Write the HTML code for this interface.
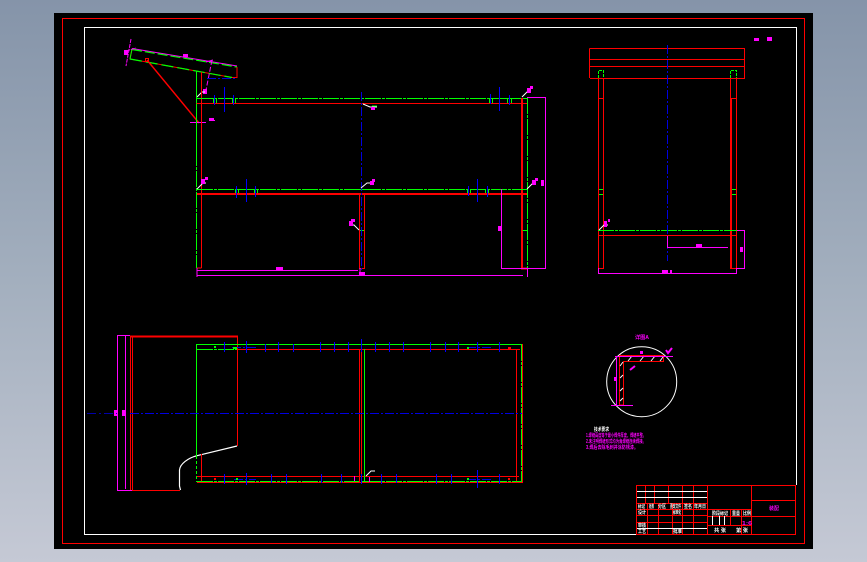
<!DOCTYPE html>
<html><head><meta charset="utf-8"><style>
html,body{margin:0;padding:0;width:867px;height:562px;overflow:hidden;background:linear-gradient(180deg,#8594a9 0%,#a3afbe 50%,#c5c9d5 100%)}
svg{position:absolute;left:0;top:0;display:block}
text{font-family:"Liberation Sans","Noto Sans CJK SC",sans-serif;font-weight:bold}
.r{stroke:#f00;fill:none;shape-rendering:crispEdges}
.g{stroke:#0f0;fill:none;shape-rendering:crispEdges}
.gd{stroke:#0f0;fill:none;stroke-dasharray:16 1 3 1;shape-rendering:crispEdges}
.m{stroke:#f0f;fill:none;shape-rendering:crispEdges}
.b{stroke:#00f;fill:none;shape-rendering:crispEdges}
.bd{stroke:#0000e0;fill:none;stroke-dasharray:9 2 2 2;shape-rendering:crispEdges}
.w{stroke:#fff;fill:none;shape-rendering:crispEdges}
.t{fill:#f0f;font-size:5px}
</style></head><body>
<svg width="867" height="562" viewBox="0 0 867 562">
<rect x="54" y="13" width="759" height="536" fill="#000"/>
<!-- frames -->
<path class="r" d="M62.5 18.5H804.5V543.5H62.5Z"/>
<path class="w" d="M636 534.5H84.5V27.5H796.5V485"/>

<!-- slanted plate -->
<path d="M132 48.5L237 66" stroke="#f0f" stroke-width="1" fill="none"/>
<path d="M132 49.5L237 67" stroke="#0f0" stroke-width="1.2" stroke-dasharray="10 3" fill="none"/>
<path d="M132 49L130 59L196 71L232 77.5H237V67" stroke="#f00" fill="none"/>
<path d="M130 59L196 71L232 77.5" stroke="#0f0" stroke-width="1.2" stroke-dasharray="12 4" fill="none"/>
<path d="M132 49L130 59" stroke="#0f0" fill="none"/>
<path d="M147 60L199 123" stroke="#f00" stroke-width="1.4" fill="none"/>
<rect x="145.5" y="58.5" width="3" height="3" fill="none" stroke="#f00"/>
<path d="M131 39L126 66M126 51L136 48" stroke="#f0f" stroke-dasharray="4 1" fill="none"/>
<path d="M212 60L206 90" stroke="#f0f" stroke-dasharray="5 2" fill="none"/>
<path d="M206 62L213 60" stroke="#f0f" fill="none"/>
<path class="bd" d="M207 78.5H237"/>
<path class="m" d="M190 122.5H206M209 120.5H215"/>
<rect x="183" y="54" width="5" height="3" fill="#f0f"/>
<rect x="209" y="118" width="5" height="2.5" fill="#f0f"/>
<rect x="124" y="50" width="4" height="5" fill="#f0f"/>
<rect x="203" y="89" width="4" height="5" fill="#f0f"/>
<path d="M197 97L202 92H205" stroke="#fff" fill="none"/>

<!-- front view -->
<path class="g" d="M196.5 71V150"/>
<path class="gd" d="M196.5 150V268"/>
<path class="r" d="M201.5 72V268M201.5 268H197M196.5 103.5H527"/>
<path class="gd" d="M197 98.5H527"/>
<path d="M522 98V268.5H527.5" stroke="#f00" stroke-width="1.6" fill="none" shape-rendering="crispEdges"/>
<path class="gd" d="M527.5 98V268"/>
<path class="gd" d="M197 189.5H527"/>
<path d="M197 194H527" stroke="#f00" stroke-width="2" shape-rendering="crispEdges"/>
<path d="M359.5 194V268.5H364.5V194" stroke="#f00" stroke-width="1.4" fill="none" shape-rendering="crispEdges"/>
<path class="g" d="M360 230.5H364M522.5 230.5H527M360 189.5H365"/>
<path class="bd" d="M361.5 92V270"/>
<!-- blue ticks front -->
<path class="b" d="M214.5 95V105M224.5 87V112M233.5 95V105M490.5 94V104M499.5 87V111M509.5 95V105M236.5 186V198M246.5 179V202M255.5 186V197M468.5 186V196M477.5 179V202M487.5 186V197"/>
<path class="g" d="M213.5 98V103M216.5 98V103M232.5 99V103M235.5 99V103M489.5 98V103M492.5 98V103M507.5 98V103M511.5 98V103M235.5 189V193M238.5 189V193M254.5 189V193M257.5 189V193M467.5 189V193M470.5 189V193M485.5 189V193M488.5 189V193"/>
<!-- front dims -->
<path class="m" d="M501.5 189V268.5H545.5V97.5H527M197 270.5H358M197 275.5H523M527.5 268V277M197 268V277M360 268V275"/>
<rect x="276" y="267" width="7" height="3" fill="#f0f"/>
<rect x="359" y="272" width="6" height="3" fill="#f0f"/>
<rect x="541" y="180" width="3" height="6" fill="#f0f"/>
<rect x="498" y="226" width="4" height="5" fill="#f0f"/>
<!-- leaders front -->
<path d="M197 189L203 183H206M361 188L367 183H370M522 97L527 92H531M527 189L533 183H536M359 230L354 225H350M363 104L370 107H377" stroke="#fff" fill="none"/>
<rect x="201" y="179" width="4" height="5" fill="#f0f"/><rect x="205" y="177" width="3" height="3" fill="#f0f"/>
<rect x="370" y="181" width="4" height="4" fill="#f0f"/><rect x="372" y="179" width="3" height="3" fill="#f0f"/>
<rect x="527" y="88" width="4" height="5" fill="#f0f"/><rect x="530" y="86" width="3" height="3" fill="#f0f"/>
<rect x="532" y="180" width="4" height="5" fill="#f0f"/><rect x="535" y="178" width="3" height="3" fill="#f0f"/>
<rect x="349" y="221" width="4" height="5" fill="#f0f"/><rect x="351" y="219" width="4" height="3" fill="#f0f"/>
<rect x="371" y="107" width="4" height="3" fill="#f0f"/><path class="g" d="M372 106H377"/>

<!-- side view -->
<path class="r" d="M589.5 48.5H744.5V78.5H590M589.5 48.5V78M589.5 59.5H744.5M589.5 66.5H744.5"/>
<path d="M598.5 78V268.5H603.5V78M730.5 78V268.5H736.5V78" stroke="#f00" stroke-width="1.3" fill="none" shape-rendering="crispEdges"/>
<path class="r" d="M731.5 98V268"/>
<path d="M598.5 78V70.5H603.5V78M730.5 78V70.5H736.5V78" stroke="#0f0" stroke-dasharray="3 1" fill="none" shape-rendering="crispEdges"/>
<path class="g" d="M599 189.5H603M599 194.5H603M732 189.5H736M732 194.5H736"/>
<path class="r" d="M598 98.5H603M731 98.5H736"/>
<path class="gd" d="M598 230.5H737"/>
<path class="r" d="M598 235.5H737"/>
<path class="bd" d="M667.5 45V261"/>
<path class="m" d="M667.5 236V248M668 247.5H728M737 230.5H744.5V268.5H737M598.5 268V274M736.5 268V274M599 273.5H736"/>
<rect x="696" y="244" width="6" height="3" fill="#f0f"/>
<rect x="740" y="247" width="3" height="5" fill="#f0f"/>
<rect x="662" y="270" width="6" height="3" fill="#f0f"/><rect x="670" y="270" width="2" height="3" fill="#f0f"/>
<path d="M599 230L604 225H608" stroke="#fff" fill="none"/>
<rect x="604" y="221" width="3" height="6" fill="#f0f"/><rect x="608" y="219" width="2" height="3" fill="#f0f"/>
<rect x="754" y="38" width="5" height="3" fill="#f0f"/>
<rect x="767" y="37" width="5" height="4" fill="#f0f"/>

<!-- plan view -->
<path class="m" d="M117.5 335.5V490.5M125.5 336V489M117 335.5H130M117 490.5H132"/>
<rect x="114" y="410" width="3" height="6" fill="#f0f"/><rect x="122" y="410" width="3" height="6" fill="#f0f"/>
<path class="r" d="M130.5 336V490M132.5 336V490M132 490.5H180M237.5 336V446"/>
<path d="M130 336.5H238" stroke="#f00" stroke-width="2" shape-rendering="crispEdges"/>
<path d="M237 446L197 455.7C188 458 180 464 179.5 470V486L180.5 490" stroke="#fff" stroke-width="1.2" fill="none"/>
<path class="g" d="M196.5 344V456M197 344.5H522"/>
<path d="M196.5 456V482" stroke="#0f0" stroke-dasharray="3 2" fill="none" shape-rendering="crispEdges"/>
<path class="gd" d="M197 349.5H237"/>
<path class="r" d="M237 349.5H520M197 476.5H519M201.5 454V482M516.5 349V482"/>
<path class="gd" d="M197 481.5H522M521.5 345V482"/>
<path d="M197 482.5H522.5M522.5 344V483" stroke="#f00" stroke-width="1.4" fill="none" shape-rendering="crispEdges"/>
<path d="M359.5 349V482M361.5 349V482" stroke="#f00" stroke-width="1.4" fill="none" shape-rendering="crispEdges"/>
<path class="g" d="M364.5 349V482"/>
<path class="bd" d="M130 413.5H522"/>
<path stroke="#00a" stroke-dasharray="9 3 2 3" d="M87 413.5H117" fill="none" shape-rendering="crispEdges"/>
<!-- blue ticks plan -->
<path class="b" d="M224.5 342V352M246.5 341V353M265.5 344V352M278.5 342V352M293.5 344V352M320.5 342V352M334.5 342V352M348.5 342V352M361.5 339V352M375.5 342V352M389.5 342V352M403.5 342V352M430.5 342V352M445.5 342V352M458.5 342V352M477.5 342V352M499.5 342V352M224.5 474V484M246.5 473V485M271.5 474V483M286.5 474V484M321.5 474V483M341.5 474V483M361.5 474V484M381.5 474V484M396.5 474V483M436.5 474V484M451.5 474V484M477.5 470V488M499.5 474V484"/>
<path class="bd" d="M232 347.5H256M234 479.5H256M467 347.5H492M467 479.5H492"/>
<rect x="214" y="346" width="2" height="2" fill="#0f0"/><rect x="233" y="347" width="4" height="2" fill="#0f0"/>
<rect x="214" y="478" width="2" height="2" fill="#f00"/><rect x="236" y="478" width="2" height="2" fill="#0f0"/>
<rect x="508" y="347" width="3" height="2" fill="#f00"/><rect x="508" y="478" width="2" height="2" fill="#f00"/>
<rect x="467" y="347" width="2" height="2" fill="#0f0"/><rect x="467" y="478" width="2" height="2" fill="#0f0"/>
<path d="M366 476L371 471H375" stroke="#fff" fill="none"/>
<path class="m" d="M354.5 476V481M369.5 477V482"/>

<!-- detail circle -->
<circle cx="641.7" cy="381.7" r="35" stroke="#fff" fill="none"/>
<path d="M619.5 405V355.5H663.5V361.5H623.5V405H619.5" stroke="#f00" stroke-width="1.3" fill="none" shape-rendering="crispEdges"/>
<path d="M628 361L632 356M640 361L644 356M651 361L655 356M660 361L663 357M620 366L623 362M620 378L623 375M620 391L623 388M620 401L623 398" stroke="#fff" fill="none"/>
<path class="m" d="M615 356.5H673M616.5 356V405M611 405.5H633"/>
<path d="M630 370L635 366" stroke="#f0f" stroke-width="2" fill="none"/>
<rect x="614" y="377" width="3" height="4" fill="#f0f"/>
<rect x="640" y="351" width="3" height="3" fill="#f0f"/>
<path d="M666 350L668 353L672 348" stroke="#f0f" stroke-width="2" fill="none"/>
<text class="t" x="635" y="339" textLength="14" lengthAdjust="spacingAndGlyphs">详图A</text>
<text x="594" y="431" fill="#fff" font-size="5" textLength="15" lengthAdjust="spacingAndGlyphs">技术要求</text>
<text class="t" x="586" y="437" textLength="60" lengthAdjust="spacingAndGlyphs">1.焊缝高度等于最小焊件厚度，焊缝平整。</text>
<text class="t" x="586" y="443" textLength="60" lengthAdjust="spacingAndGlyphs">2.未注明焊缝形式均为角焊缝连续焊接。</text>
<text class="t" x="586" y="449" textLength="52" lengthAdjust="spacingAndGlyphs">3.焊后去除毛刺并涂防锈漆。</text>

<!-- title block -->
<path class="r" d="M636.5 485.5H795.5V534.5H636.5ZM645.5 485V503M654.5 485V503M668.5 485V503M682.5 485V509M693.5 485V509M707.5 485V534M751.5 485V534M636 503.5H707M636 509.5H751M636 515.5H707M636 522.5H707M707 516.5H751M707 525.5H751M751 500.5H796M751 516.5H796M647.5 503V534M658.5 503V534M672.5 503V534M682.5 509V534M693.5 509V534M730.5 509V525M741.5 509V534"/>
<path class="w" d="M637 491.5H707M637 497.5H707M637 528.5H707M712.5 516V525M719.5 516V525M724.5 516V525"/>
<g fill="#fff" font-size="5">
<text x="638" y="508" textLength="7" lengthAdjust="spacingAndGlyphs">标记</text>
<text x="649" y="508" textLength="5" lengthAdjust="spacingAndGlyphs">处数</text>
<text x="658" y="508" textLength="8" lengthAdjust="spacingAndGlyphs">分区</text>
<text x="670" y="508" textLength="11" lengthAdjust="spacingAndGlyphs">更改文件</text>
<text x="684" y="508" textLength="8" lengthAdjust="spacingAndGlyphs">签名</text>
<text x="694" y="508" textLength="12" lengthAdjust="spacingAndGlyphs">年月日</text>
<text x="638" y="514" textLength="8" lengthAdjust="spacingAndGlyphs">设计</text>
<text x="673" y="514" textLength="8" lengthAdjust="spacingAndGlyphs">标准化</text>
<text x="638" y="527" textLength="8" lengthAdjust="spacingAndGlyphs">审核</text>
<text x="638" y="533" textLength="8" lengthAdjust="spacingAndGlyphs">工艺</text>
<text x="673" y="533" textLength="9" lengthAdjust="spacingAndGlyphs">批准</text>
<text x="712" y="515" textLength="16" lengthAdjust="spacingAndGlyphs">阶段标记</text>
<text x="732" y="515" textLength="8" lengthAdjust="spacingAndGlyphs">重量</text>
<text x="743" y="515" textLength="8" lengthAdjust="spacingAndGlyphs">比例</text>
<text x="714" y="532" textLength="12" lengthAdjust="spacingAndGlyphs">共 张</text>
<text x="736" y="532" textLength="12" lengthAdjust="spacingAndGlyphs">第 张</text>
</g>
<text class="t" x="742" y="525" font-size="6" textLength="10" lengthAdjust="spacingAndGlyphs">1:6</text>
<text class="t" x="769" y="510" font-size="7" textLength="10" lengthAdjust="spacingAndGlyphs">装配</text>
<path d="M630 534.5H636" stroke="#fff" fill="none" shape-rendering="crispEdges"/>
</svg>
</body></html>
